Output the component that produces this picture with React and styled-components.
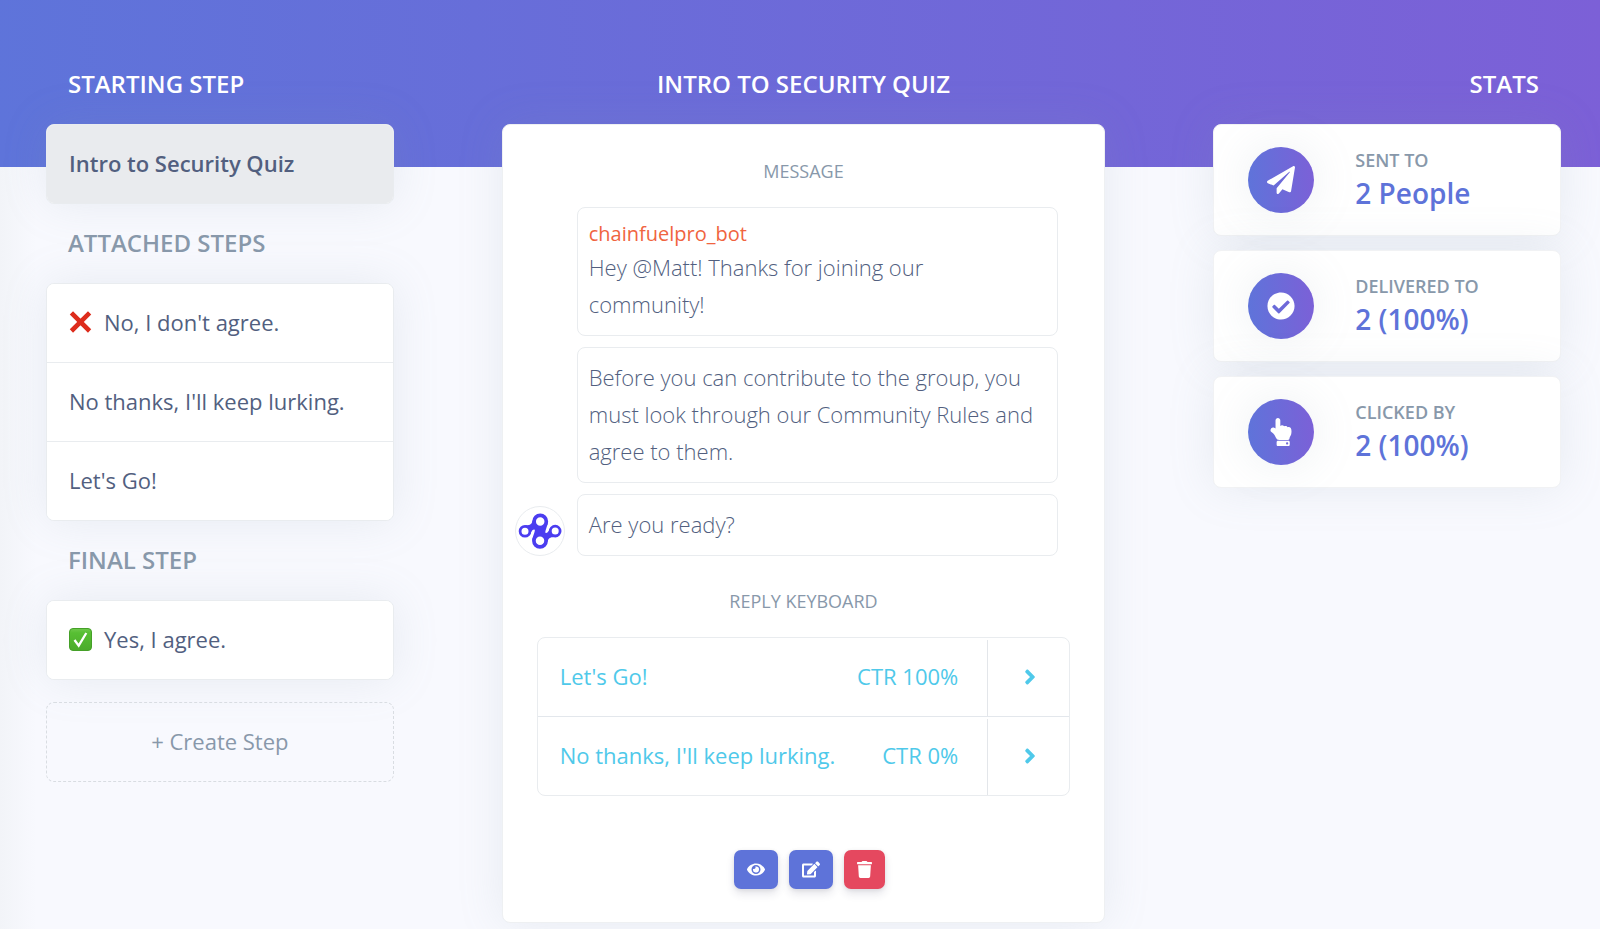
import styled, { createGlobalStyle } from "styled-components";
import {
  FaAngleRight,
  FaCheckCircle,
  FaEdit,
  FaEye,
  FaHandPointUp,
  FaPaperPlane,
  FaTrash,
} from "react-icons/fa";

const attachedSteps = [
  { label: "No, I don't agree.", icon: "cross" },
  { label: "No thanks, I'll keep lurking." },
  { label: "Let's Go!" },
]

const replies = [
  { label: "Let's Go!", ctr: "CTR 100%" },
  { label: "No thanks, I'll keep lurking.", ctr: "CTR 0%" },
]

const stats = [
  { label: "Sent to", value: "2 People", Icon: FaPaperPlane },
  { label: "Delivered to", value: "2 (100%)", Icon: FaCheckCircle },
  { label: "Clicked by", value: "2 (100%)", Icon: FaHandPointUp },
]

function CrossIcon() {
  return (
    <svg width="23" height="23" viewBox="0 0 23 23" aria-hidden="true">
      <path d="M2.4 1.8 L20.6 20 M20.6 1.8 L2.4 20" stroke="#dd2c1c" strokeWidth="4.6" />
    </svg>
  )
}

function CheckIcon() {
  return (
    <svg width="23" height="23" viewBox="0 0 23 23" aria-hidden="true">
      <defs>
        <linearGradient id="tick" x1="0" y1="0" x2="0" y2="1">
          <stop offset="0" stopColor="#6fc94c" />
          <stop offset="0.2" stopColor="#57bf33" />
          <stop offset="1" stopColor="#4bab2b" />
        </linearGradient>
      </defs>
      <rect x="0.5" y="0.5" width="22" height="22" rx="3.5" fill="url(#tick)" stroke="#45a028" />
      <path d="M5.5 12 L9.7 17.6 L17.3 5" fill="none" stroke="#fff" strokeWidth="2.3" />
    </svg>
  )
}

// Four linked rings
function BotLogo() {
  return (
    <svg width="44" height="38" viewBox="0 0 44 38" aria-hidden="true">
      <path
        d="M14.5 8.5 C14 13 10.5 13.4 7 13.4 L11.5 23.5 C13 20.5 14 17.2 16.2 17.4 C18.2 17.6 15 23 14.3 28 L29.7 29.5 C30.2 25.4 34 25 37.2 25 L32.7 15 C31.2 18 30 21.2 28 21 C26 20.8 29.2 15.4 29.9 9.5 Z"
        fill="#4b3df0"
      />
      <g fill="#fff" stroke="#4b3df0">
        <circle cx="22.2" cy="9.4" r="6.1" strokeWidth="3.7" />
        <circle cx="22" cy="28.8" r="6.1" strokeWidth="3.7" />
        <circle cx="7" cy="19.3" r="4.9" strokeWidth="2.8" />
        <circle cx="37.2" cy="19.1" r="4.9" strokeWidth="2.8" />
      </g>
    </svg>
  )
}

export default function App() {
  return (
    <Page>
      <GlobalStyle />
      <Columns>
        <section>
          <Heading $light>Starting step</Heading>
          <StepList>
            <li><StepButton $active>Intro to Security Quiz</StepButton></li>
          </StepList>
          <Heading>Attached steps</Heading>
          <StepList>
            {attachedSteps.map(step => (
              <li key={step.label}>
                <StepButton>
                  {step.icon && <CrossIcon />}
                  {step.label}
                </StepButton>
              </li>
            ))}
          </StepList>
          <Heading>Final step</Heading>
          <StepList>
            <li><StepButton><CheckIcon />Yes, I agree.</StepButton></li>
          </StepList>
          <CreateButton>+ Create Step</CreateButton>
        </section>

        <section>
          <Heading $light $align="center">Intro to Security Quiz</Heading>
          <Editor>
            <SubHeading>Message</SubHeading>
            <Chat>
              <Avatar><BotLogo /></Avatar>
              <Bubbles>
                <Bubble>
                  <BotName>chainfuelpro_bot</BotName>
                  <p>Hey @Matt! Thanks for joining our community!</p>
                </Bubble>
                <Bubble>
                  <p>Before you can contribute to the group, you must look through our Community Rules and agree to them.</p>
                </Bubble>
                <Bubble>
                  <p>Are you ready?</p>
                </Bubble>
              </Bubbles>
            </Chat>
            <SubHeading>Reply keyboard</SubHeading>
            <Keyboard>
              {replies.map(reply => (
                <Reply key={reply.label}>
                  <ReplyLink href="#reply">
                    <span>{reply.label}</span>
                    <span>{reply.ctr}</span>
                  </ReplyLink>
                  <OpenButton aria-label={reply.label}><FaAngleRight /></OpenButton>
                </Reply>
              ))}
            </Keyboard>
            <Actions>
              <ActionButton aria-label="Preview"><FaEye /></ActionButton>
              <ActionButton aria-label="Edit"><FaEdit /></ActionButton>
              <ActionButton $danger aria-label="Delete"><FaTrash /></ActionButton>
            </Actions>
          </Editor>
        </section>

        <section>
          <Heading $light $align="right">Stats</Heading>
          <StatList>
            {stats.map(({ label, value, Icon }) => (
              <StatCard key={label}>
                <StatIcon><Icon /></StatIcon>
                <div>
                  <StatLabel>{label}</StatLabel>
                  <StatValue>{value}</StatValue>
                </div>
              </StatCard>
            ))}
          </StatList>
        </section>
      </Columns>
    </Page>
  )
}

const GlobalStyle = createGlobalStyle`
  * {
    box-sizing: border-box;
  }

  body {
    margin: 0;
    background: #f8f9fe;
    color: #525f7f;
    font-family: "Open Sans", sans-serif;
    font-size: 22px;
    line-height: 34px;
  }

  h2, h3, p, ul {
    margin: 0;
    padding: 0;
  }

  ul {
    list-style: none;
  }

  button {
    font: inherit;
    color: inherit;
    cursor: pointer;
  }
`

const Page = styled.main`
  min-height: 100vh;
  padding: 62px 39px 6px 46px;
  background:
    linear-gradient(87deg, #5e74da, #7c60d7) top / 100% 167px no-repeat,
    linear-gradient(90deg, #f2f4f8, #f8f9fe) left / 36px 100% no-repeat,
    #f8f9fe;
`

const Columns = styled.div`
  display: grid;
  grid-template-columns: minmax(0, 348fr) minmax(0, 604fr) minmax(0, 348fr);
  gap: 108px;
  align-items: start;
`

const Heading = styled.h2`
  padding: 5px 22px 23px;
  color: ${props => (props.$light ? "#fff" : "#8898aa")};
  font-size: 24px;
  font-weight: 600;
  line-height: 34px;
  text-align: ${props => props.$align || "left"};
  text-transform: uppercase;

  ul + & {
    padding-top: 22px;
  }
`

const StepList = styled.ul`
  border: 1px solid #e9ecef;
  border-radius: 8px;
  overflow: hidden;
  background: #fff;
  box-shadow: 0 0 46px rgba(136, 152, 170, 0.15);

  li + li {
    border-top: 1px solid #e9ecef;
  }
`

const StepButton = styled.button`
  display: flex;
  align-items: center;
  gap: 12px;
  width: 100%;
  padding: 21px 22px 23px;
  border: 0;
  background: ${props => (props.$active ? "#e9ebee" : "#fff")};
  font-weight: ${props => (props.$active ? 600 : 400)};
  text-align: left;
`

const CreateButton = styled.button`
  width: 100%;
  margin-top: 22px;
  padding: 21px 22px 23px;
  border: 1px dashed #d9dde2;
  border-radius: 8px;
  background: none;
  color: #8898aa;
`

const Editor = styled.div`
  padding: 29px 34px 33px;
  border: 1px solid #eef0f2;
  border-radius: 8px;
  background: #fff;
  box-shadow: 0 0 46px rgba(136, 152, 170, 0.15);
`

const SubHeading = styled.h3`
  color: #8898aa;
  font-size: 18px;
  font-weight: 400;
  line-height: 34px;
  text-align: center;
  text-transform: uppercase;
`

const Chat = styled.div`
  display: flex;
  align-items: flex-end;
  gap: 12px;
  margin: 19px 12px 28px -22px;
`

const Avatar = styled.div`
  display: flex;
  flex: none;
  align-items: center;
  justify-content: center;
  width: 50px;
  height: 50px;
  border: 1px solid #e9ecef;
  border-radius: 50%;
`

const Bubbles = styled.div`
  display: flex;
  flex: 1;
  flex-direction: column;
  gap: 11px;
`

const Bubble = styled.div`
  padding: 11px 18px 12px 11px;
  border: 1px solid #e9ecef;
  border-radius: 8px;
  font-weight: 300;
  line-height: 37px;
`

const BotName = styled.strong`
  display: block;
  color: #f0643f;
  font-size: 20px;
  font-weight: 400;
  line-height: 30px;
`

const Keyboard = styled.ul`
  margin-top: 19px;
  border: 1px solid #e9ecef;
  border-radius: 8px;
`

const Reply = styled.li`
  display: flex;
  color: #4fc9ea;

  & + & {
    border-top: 1px solid #e3e7ec;
  }
`

const ReplyLink = styled.a`
  display: flex;
  flex: 1;
  justify-content: space-between;
  padding: 21px 29px 23px 22px;
  color: inherit;
  text-decoration: none;
`

const OpenButton = styled.button`
  display: flex;
  align-items: center;
  justify-content: center;
  width: 82px;
  margin-top: 2px;
  padding: 0 0 2px 3px;
  border: 0;
  border-left: 1px solid #e3e6ea;
  background: none;

  svg {
    width: 24px;
    height: 24px;
  }
`

const Actions = styled.div`
  display: flex;
  justify-content: center;
  gap: 11px;
  margin-top: 54px;
  padding-left: 12px;
`

const ActionButton = styled.button`
  display: flex;
  align-items: center;
  padding: 11px 13px;
  border: 0;
  border-radius: 7px;
  background: ${props => (props.$danger ? "#e5485f" : "#5e73d9")};
  box-shadow: 0 5px 9px rgba(50, 50, 93, 0.12), 0 1px 4px rgba(0, 0, 0, 0.08);
  color: #fff;

  svg {
    width: ${props => (props.$danger ? 15 : 18)}px;
    height: 17px;
  }
`

const StatList = styled.div`
  display: grid;
  gap: 14px;
`

const StatCard = styled.div`
  display: flex;
  align-items: center;
  gap: 41px;
  padding: 22px 34px;
  border: 1px solid #f1f2f4;
  border-radius: 8px;
  background: #fff;
  box-shadow: 0 0 46px rgba(136, 152, 170, 0.15);
`

const StatIcon = styled.div`
  display: flex;
  flex: none;
  align-items: center;
  justify-content: center;
  width: 66px;
  height: 66px;
  border-radius: 50%;
  background: linear-gradient(87deg, #5e74da, #7c60d7);
  box-shadow: 0 0 46px rgba(136, 152, 170, 0.15);
  color: #fff;
  font-size: 28px;
`

const StatLabel = styled.h3`
  color: #8898aa;
  font-size: 18px;
  font-weight: 600;
  line-height: 26px;
  text-transform: uppercase;
`

const StatValue = styled.p`
  color: #5e73d9;
  font-size: 28px;
  font-weight: 600;
  line-height: 40px;
`
